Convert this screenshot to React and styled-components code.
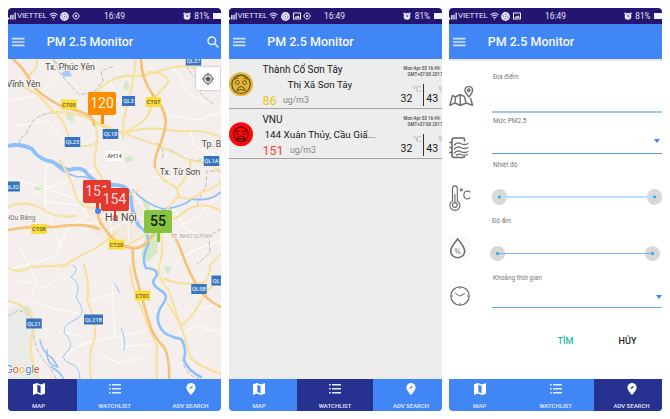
import React from "react";
import styled, { createGlobalStyle } from "styled-components";

const GlobalStyle = createGlobalStyle`
  *, *::before, *::after { box-sizing: border-box; }
  body { margin: 0; background: #fff; font-family: Roboto, "Noto Sans", sans-serif; }
  svg { display: block; flex: none; }
`;

const Board = styled.main`
  display: flex;
  gap: 7.5px;
  padding: 8px 0 0 8px;
  width: 670px;
  height: 419px;
  overflow: hidden;
`;

const Phone = styled.section`
  width: 213px;
  height: 403px;
  flex: none;
  display: flex;
  flex-direction: column;
  border-radius: 4px;
  overflow: hidden;
  background: ${(p) => p.$bg};
`;

/* ---------- status bar ---------- */

const StatusBar = styled.div`
  height: 16px;
  flex: none;
  display: grid;
  grid-template-columns: ${(p) => p.$timeAt}px 1fr auto;
  align-items: center;
  background: #241670;
  color: #e4e0f5;
  overflow: hidden;
`;

const StatusLeft = styled.div`
  display: flex;
  align-items: center;
  gap: 2.7px;
`;

const Carrier = styled.span`
  display: flex;
  align-items: center;
  gap: 1px;
  width: 38px;
  font-size: 8px;
  line-height: 16px;
  letter-spacing: -0.1px;
`;

const Clock = styled.span`
  font-size: 8.4px;
  line-height: 16px;
`;

const StatusRight = styled.div`
  display: flex;
  align-items: center;
  gap: 3.5px;
  font-size: 8.2px;
`;

const Battery = styled.i`
  width: 8px;
  height: 6px;
  background: #f3f1fb;
`;

const SignalIcon = () => (
  <svg width="8" height="8" viewBox="0 0 8 8" fill="#fff">
    <rect x="0" y="5.5" width="1.2" height="2" />
    <rect x="2.2" y="3" width="1.3" height="4.5" />
    <rect x="4.4" y="2.6" width="1.2" height="4.9" />
    <rect x="6.6" y="0.5" width="1.1" height="7" />
  </svg>
);

const WifiIcon = () => (
  <svg width="9" height="8" viewBox="0 0 9 8" fill="none" stroke="#d9d4ef" strokeWidth="1.1">
    <path d="M.5 2.8Q4.5-.8 8.5 2.8M1.9 4.4Q4.5 2 7.1 4.4M3.1 5.9Q4.5 4.6 5.9 5.9" />
    <circle cx="4.5" cy="7" r=".6" fill="#fff" stroke="none" />
  </svg>
);

const BadgeIcon = () => (
  <svg width="9" height="9" viewBox="0 0 9 9">
    <circle cx="4.5" cy="4.5" r="4.4" fill="#efedf9" />
    <circle cx="4.5" cy="4.5" r="2.5" fill="none" stroke="#5d52a0" strokeWidth=".9" strokeDasharray="2.6 1" />
    <circle cx="4.5" cy="4.5" r=".7" fill="#6a60a8" />
  </svg>
);

const TargetIcon = () => (
  <svg width="8" height="8" viewBox="0 0 8 8" fill="none" stroke="#cfc9ea" strokeWidth=".9">
    <circle cx="4" cy="4" r="2.9" />
    <circle cx="4" cy="4" r="1.2" fill="#cfc9ea" stroke="none" />
    <path d="M4 0v1M4 7v1M0 4h1M7 4h1" />
  </svg>
);

const PictureIcon = () => (
  <svg width="8" height="8" viewBox="0 0 8 8">
    <rect x=".5" y="1" width="7" height="6" fill="none" stroke="#ece9f8" />
    <path d="M1.5 5.8L3 4l1 1 1.3-1.8L6.7 5.8z" fill="#fff" />
  </svg>
);

const AlarmIcon = () => (
  <svg width="8" height="8" viewBox="0 0 8 8">
    <circle cx="4" cy="4.4" r="3.3" fill="#e9e6f6" />
    <path d="M.4 2L2 .6M7.6 2L6 .6" stroke="#e9e6f6" strokeWidth="1.1" />
    <path d="M4 2.6v2l1.3-.6" fill="none" stroke="#2a1c74" strokeWidth=".8" />
  </svg>
);

const badges = { target: TargetIcon, picture: PictureIcon };

const Status = ({ icons, timeAt }) => (
  <StatusBar $timeAt={timeAt}>
    <StatusLeft>
      <Carrier><SignalIcon />VIETTEL</Carrier>
      <WifiIcon />
      <BadgeIcon />
      {icons.map((name) => {
        const Icon = badges[name];
        return <Icon key={name} />;
      })}
    </StatusLeft>
    <Clock>16:49</Clock>
    <StatusRight><AlarmIcon />81%<Battery /></StatusRight>
  </StatusBar>
);

/* ---------- app bar ---------- */

const AppBar = styled.header`
  height: 35px;
  flex: none;
  display: flex;
  align-items: center;
  padding: 0 2.5px 0 4px;
  background: #4186f5;
  color: #f6faff;
`;

const Title = styled.h1`
  flex: 1;
  margin: 0 0 0 21.7px;
  font-size: 12.5px;
  font-weight: 500;
  line-height: 16px;
`;

const Header = ({ search }) => (
  <AppBar>
    <svg width="13" height="10" viewBox="0 0 13 10" fill="#cfe0fd">
      <path d="M0 .8h12.5v1.6H0zM0 4.2h12.5v1.6H0zM0 7.6h12.5v1.6H0z" />
    </svg>
    <Title>PM 2.5 Monitor</Title>
    {search && (
      <svg width="12" height="12" viewBox="0 0 12 12" fill="none" stroke="#e6effe" strokeWidth="1.5">
        <circle cx="4.8" cy="4.8" r="3.8" />
        <path d="M7.5 7.5L11.4 11.4" />
      </svg>
    )}
  </AppBar>
);

/* ---------- bottom navigation ---------- */

const NavBar = styled.nav`
  height: 32px;
  flex: none;
  display: grid;
  grid-template-columns: repeat(3, 76px);
  margin-left: -7.5px;
  width: 228px;
  background: #4186f5;
`;

const Tab = styled.div`
  display: flex;
  flex-direction: column;
  align-items: center;
  gap: 6.5px;
  padding-top: 4px;
  color: ${(p) => (p.$active ? "#e3e6f8" : "#e1ecff")};
  background: ${(p) => (p.$active ? "#27318f" : "transparent")};
  font-size: 6px;
  font-weight: 500;
  line-height: 8px;
`;

const MapTabIcon = ({ fold }) => (
  <svg width="12" height="12" viewBox="0 0 12 12">
    <path d="M0 1.3L4 0l4 1.4L12 0v10.7L8 12 4 10.6 0 12z" fill="#fff" />
    <path d="M4.4 1.8l3.2 1.1v7.3L4.4 9.1z" fill={fold} />
  </svg>
);

const ListTabIcon = () => (
  <svg width="12" height="12" viewBox="0 0 12 12" fill="#e6eeff">
    <path d="M0 1h1.7v1.6H0zM3 1h9v1.5H3zM0 5h1.7v1.6H0zM3 5h9v1.5H3zM0 9h1.7v1.6H0zM3 9h9v1.5H3z" />
  </svg>
);

const PinTabIcon = ({ fold }) => (
  <svg width="12" height="12" viewBox="0 0 12 12">
    <path d="M6 0a4.6 4.6 0 0 0-4.6 4.6C1.4 7.7 6 12 6 12s4.6-4.3 4.6-7.4A4.6 4.6 0 0 0 6 0z" fill="#fff" />
    <path d="M4.3 6.2L5 4.4 7.8 2.5 7.2 4.7z" fill={fold} />
  </svg>
);

const tabs = [
  { label: "MAP", Icon: MapTabIcon },
  { label: "WATCHLIST", Icon: ListTabIcon },
  { label: "ADV SEARCH", Icon: PinTabIcon },
];

const Nav = ({ active }) => (
  <NavBar>
    {tabs.map(({ label, Icon }) => (
      <Tab key={label} $active={label === active}>
        <Icon fold={label === active ? "#27318f" : "#4186f5"} />
        {label}
      </Tab>
    ))}
  </NavBar>
);

/* ---------- map ---------- */

const MapView = styled.div`
  position: relative;
  flex: 1;
  overflow: hidden;
`;

const LocateButton = styled.div`
  position: absolute;
  left: 188px;
  top: 8px;
  width: 24px;
  height: 23px;
  display: grid;
  place-items: center;
  background: #fdfdfd;
  box-shadow: 0 0 2px rgba(0, 0, 0, 0.3);
`;

const Marker = styled.div`
  position: absolute;
  left: ${(p) => p.$x}px;
  top: ${(p) => p.$y}px;
  width: 28px;
  height: 23px;
  border-radius: 2px;
  background: ${(p) => p.$bg};
  color: ${(p) => p.$color};
  font-size: 14px;
  line-height: 23px;
  text-align: center;
  font-weight: ${(p) => p.$weight || 400};
  &::after {
    content: "";
    position: absolute;
    left: 13px;
    top: 100%;
    width: 2.5px;
    height: 9px;
    background: inherit;
  }
`;

const shields = [
  ["QL37", 193.5, 60.5, "b"], ["CT05", 69, 104.5, "y"], ["QL3", 128.5, 101, "b"], ["CT07", 153.5, 102, "y"],
  ["QL18", 110.5, 134, "b"], ["QL23", 72.5, 142, "b"], ["AH14", 114.5, 156, "w"], ["QL1A", 211.5, 161, "b"],
  ["QL32", 12, 186.5, "b"], ["CT08", 39, 229, "y"], ["CT20", 116.5, 244.5, "y"], ["QL5B", 199, 289, "b"],
  ["QL5", 218, 280.5, "b"], ["CT01", 142.5, 295.5, "y"], ["QL21", 34, 323.5, "b"], ["QL21B", 93.5, 319.5, "b"],
];

const shieldFill = { b: "#3674bd", y: "#fbdc38", w: "#fefefe" };

const majorRoads = [
  "M12 58Q24 68 33 85Q38 94 63 107Q82 111 91 117Q94 121 94 125",
  "M141 59Q141 78 153 95Q164 106 166 122Q164 136 158 150Q154 160 155 167",
  "M8 230Q30 226 54 227Q84 222 99 229",
  "M98 211Q97 221 108 233Q118 247 133 248Q144 249 153 235Q158 225 164 226Q174 231 182 253Q190 276 201 292Q210 302 221 307",
  "M133 248Q132 265 137 280Q143 302 149 322Q153 337 164 347Q170 358 169 380",
];

const minorRoads = [
  "M8 81Q27 88 38 95Q50 108 60 117Q68 130 71 144Q86 149 98 142",
  "M50 112Q65 111 80 115Q100 123 124 134Q140 127 163 129Q181 132 190 131Q205 130 221 137",
  "M90 115Q92 101 98 91Q107 79 125 76Q139 75 142 76Q162 70 174 67Q190 64 207 72Q212 79 221 84",
  "M37 59Q38 70 28 76",
  "M136 59Q134 77 129 100Q122 119 123 138",
  "M95 120Q98 135 96 151Q91 164 101 176Q107 190 104 207",
  "M95 123Q102 128 124 133Q142 141 158 145Q176 154 191 161Q201 160 221 171",
  "M151 100Q152 112 145 119Q138 126 123 133",
  "M154 98Q162 90 169 82Q165 72 148 72",
  "M8 207Q25 199 42 209Q57 219 75 216",
  "M60 160Q73 182 77 199Q83 209 97 208Q120 200 139 190",
  "M155 166Q157 176 170 184Q179 186 178 197Q163 212 155 227Q142 238 126 246",
  "M178 188Q190 174 191 160M178 196Q190 203 202 192Q216 188 221 181",
  "M160 220Q175 222 185 211Q201 200 221 211",
  "M160 230Q165 247 159 266Q157 278 168 289Q175 307 180 324Q187 342 190 357Q199 367 221 374",
  "M62 267Q80 255 96 248Q109 239 117 232",
  "M84 265Q90 285 87 300Q98 325 94 341Q88 350 91 380",
  "M8 301Q28 305 33 319Q33 334 31 342Q30 360 39 380",
  "M130 267Q132 291 142 309Q148 328 157 345Q156 365 157 380",
  "M164 279Q184 286 201 283Q210 281 210 265Q216 258 221 254",
  "M180 326Q192 319 201 301Q206 287 221 282",
  "M168 304L181 325M8 268Q20 274 31 267L68 265",
];

const thinRoads = [
  "M10 101L38 95L58 76M15 126L48 121L67 145M8 177Q45 188 80 200M31 194L67 181L94 170M46 162L45 205L62 250",
  "M8 270L55 257L68 228L86 217M45 202L79 205L105 232M20 280L45 288L62 274M36 302L55 309L84 314",
  "M67 353Q86 339 113 338Q145 332 151 326M59 332L82 336M63 360L77 346L95 341M112 284L115 337M93 300L117 293",
  "M173 65L188 92L205 103M168 115L198 120L220 112M111 80L115 103M100 98L133 103M190 130L194 146L217 157",
  "M105 183L123 206L146 221M96 218L117 211L140 202M103 235L137 214M109 210L112 239M86 224L118 219L148 227M126 195L129 240M118 183L134 194L150 217",
  "M151 176L166 179L183 169L197 176M172 205L185 228L211 240M180 225L199 216L213 200M177 260L197 249L221 240M190 311L221 304M177 334L199 326L221 334",
  "M20 248L36 279L31 298M120 347L149 344M101 355L119 363L141 358",
];

const rivers = [
  ["M8 146Q20 143 32 149Q39 160 53 162Q62 168 69 170Q80 167 85 171Q95 185 112 185Q129 184 131 198Q132 216 139 226", 3.8],
  ["M139 226Q150 234 148 245Q141 259 146 268Q160 269 156 277Q149 283 160 290Q170 295 163 304Q153 317 162 330Q166 336 181 339Q187 347 184 360Q188 371 201 377", 2.6],
  ["M133 190Q145 204 163 209Q183 207 192 199Q210 202 221 192", 1.8],
  ["M51 160Q60 172 77 177Q88 175 95 183", 1.5],
  ["M40 340Q42 352 52 358L58 367Q46 365 47 350M51 367Q61 372 64 380", 1.5],
  ["M72 265Q81 268 71 277Q82 284 76 298Q88 312 77 319Q63 324 64 333Q74 341 69 350Q56 359 74 365Q80 370 80 380", 0.9],
  ["M53 59Q61 68 69 75M121 328Q126 338 124 350M115 284L120 293M171 150Q191 164 201 160", 0.9],
];

const borders = [
  "M53 113Q42 113 34 120Q29 127 26 135Q17 138 20 144",
  "M54 60Q58 73 67 81Q73 89 80 95L95 91L103 81L101 71L114 66",
  "M187 59Q184 69 197 78Q203 83 200 93L213 104",
  "M8 316L19 310L31 316L34 337Q37 355 49 366L57 380",
  "M221 171L207 171L206 185L196 207M221 229L209 236L210 253L197 264",
  "M157 143Q167 151 161 160M183 358Q183 374 199 379",
];

const CityMap = () => (
  <svg width="213" height="320" viewBox="8 59 213 320" fontFamily="Roboto, 'Noto Sans', sans-serif" textAnchor="middle">
    <rect x="8" y="59" width="213" height="321" fill="#f4efec" />
    <path d="M8 309L28 305L35 329L31 356L38 380H8z" fill="#eaeae6" />
    <path d="M86 211Q93 185 118 188Q148 195 143 225Q137 244 115 245Q91 239 86 211z" fill="#f4e9df" />
    <g fill="#d4e9c7">
      <path d="M126 80l4 5-3 6-4-3zM65 112l8 3 1 7-6-2zM124 158l6-3 4 5-7 3zM34 187l8-2 3 6-8 1zM142 196l7 7 2 13-6-3zM147 230l10 4 1 18-10 10-7-7zM21 306l8 1 4 6-8-1zM163 266l9 1-4 7z" />
    </g>
    <path d="M61 73l8-4 3 7-8 1zM98 94l6 3-3 4zM104 184l10-1-5 5zM104 101l4-2 2 4z" fill="#a9cdf8" />
    <g fill="none" strokeLinejoin="round" strokeLinecap="round">
      {thinRoads.map((d) => <path key={d} d={d} stroke="#fffdfb" strokeWidth="1" />)}
      {borders.map((d) => <path key={d} d={d} stroke="#b3b1ae" strokeWidth=".8" strokeDasharray="4 2.5" />)}
      {rivers.map(([d, w]) => <path key={d} d={d} stroke="#90c0fb" strokeWidth={w} />)}
      {minorRoads.map((d) => <path key={d} d={d} stroke="#f3dc93" strokeWidth="1.9" />)}
      {minorRoads.map((d) => <path key={d} d={d} stroke="#fae3a0" strokeWidth="1.2" />)}
      {majorRoads.map((d) => <path key={d} d={d} stroke="#f3b769" strokeWidth="2.5" />)}
      {majorRoads.map((d) => <path key={d} d={d} stroke="#f9c67c" strokeWidth="1.4" />)}
    </g>
    {shields.map(([name, x, y, kind]) => {
      const w = name.length > 4 ? 19 : name.length < 4 ? 13 : 15.5;
      return (
        <g key={name}>
          <rect x={x - w / 2} y={y - 5} width={w} height="10" fill={shieldFill[kind]} />
          <text x={x} y={y + 2.2} fontSize="5.8" fontWeight="500" fill={kind === "b" ? "#e3effb" : "#5c5637"}>{name}</text>
        </g>
      );
    })}
    <g fill="#494846" fontSize="8.7" stroke="#f8f4f0" strokeWidth="1.5" paintOrder="stroke">
      <text x="70" y="69.5">Tx. Phúc Yên</text>
      <text x="23.5" y="87">Vĩnh Yên</text>
      <text x="211.5" y="147">Tp. B</text>
      <text x="180" y="175">Tx. Từ Sơn</text>
      <text x="121" y="220.5" fontSize="10.5">Hà Nội</text>
      <text x="20.5" y="219.5" fontSize="6.8" fill="#77736f">Hữu Bằng</text>
      <text x="191.5" y="238" fontSize="5.7" fill="#aaa6a0">TT. NHƯ QUỲNH</text>
    </g>
    <text x="22.5" y="373" fontSize="10.8" stroke="#fff" strokeWidth="1" paintOrder="stroke">
      <tspan fill="#4186f5">G</tspan><tspan fill="#e94b3c">o</tspan><tspan fill="#f7bd16">o</tspan>
      <tspan fill="#4186f5">g</tspan><tspan fill="#3aa757">l</tspan><tspan fill="#e94b3c">e</tspan>
    </text>
  </svg>
);

const Position = styled.i`
  position: absolute;
  left: 86.8px;
  top: 149px;
  width: 6px;
  height: 6px;
  border-radius: 50%;
  background: #4186f5;
`;

const MapScreen = () => (
  <MapView>
    <CityMap />
    <LocateButton>
      <svg width="14" height="14" viewBox="0 0 14 14" fill="none" stroke="#666" strokeWidth="1.2">
        <circle cx="7" cy="7" r="4.3" />
        <circle cx="7" cy="7" r="2" fill="#555" />
        <path d="M7 .8v2M7 11.2v2M.8 7h2M11.2 7h2" />
      </svg>
    </LocateButton>
    <Marker $x={80} $y={33} $bg="#fb8c00" $color="#fff3d8">120</Marker>
    <Marker $x={75} $y={121} $bg="#e5392f" $color="#ffdad7">151</Marker>
    <Position />
    <Marker $x={92.5} $y={128.5} $bg="#e5392f" $color="#ffdad7">154</Marker>
    <Marker $x={136} $y={150.5} $bg="#86c440" $color="#17200e" $weight={500}>55</Marker>
  </MapView>
);

/* ---------- watch list ---------- */

const List = styled.div`
  flex: 1;
  background: #ededed;
`;

const Station = styled.article`
  height: 50px;
  display: grid;
  grid-template-columns: 34px 1fr 41px;
  border-bottom: 1px solid #a2a2a2;
  overflow: hidden;
`;

const Face = styled.div`
  width: 24px;
  padding-top: 13px;
`;

const Place = styled.div`
  min-width: 0;
  padding-top: 3px;
  font-size: 10px;
  line-height: 15px;
  color: #202020;
  white-space: nowrap;
`;

const Address = styled.div`
  padding-left: ${(p) => p.$indent}px;
  font-size: 9.9px;
`;

const Reading = styled.div`
  display: flex;
  align-items: center;
  gap: 6.5px;
  padding-top: 1px;
  font-size: 12.5px;
  color: ${(p) => p.$color};
`;

const Unit = styled.span`
  font-size: 8.7px;
  color: #858585;
`;

const Climate = styled.div`
  padding-top: 7px;
  overflow: hidden;
  white-space: nowrap;
`;

const Stamp = styled.div`
  margin-left: 3px;
  padding-left: ${(p) => p.$inset || 0}px;
  font-size: 4.5px;
  font-weight: 500;
  line-height: 5.5px;
  color: #4a4a4a;
`;

const Values = styled.div`
  display: flex;
  align-items: flex-end;
  height: 24px;
  margin-top: 6.5px;
  font-size: 10.5px;
  line-height: 14px;
  color: #191919;
`;

const Degree = styled.span`
  align-self: flex-start;
  flex: none;
  width: ${(p) => p.$width}px;
  margin-left: 0.5px;
  font: 8px/11px "Liberation Serif", serif;
  color: #a2a2a2;
`;

const Rule = styled.i`
  align-self: flex-start;
  flex: none;
  width: 1px;
  height: 22px;
  margin-right: 2.5px;
  background: #333;
`;

const Measure = styled.span`
  flex: none;
  padding-bottom: 2px;
`;

const WorriedFace = () => (
  <svg width="24" height="25" viewBox="0 0 24 25" fill="none" stroke="#594410" strokeWidth="1.1">
    <circle cx="12" cy="12.3" r="12" fill="#e1b53c" stroke="none" />
    <circle cx="12" cy="12.3" r="9.2" />
    <circle cx="8.5" cy="10.5" r="1.9" strokeWidth=".8" /><circle cx="15.5" cy="10.5" r="1.9" strokeWidth=".8" />
    <path d="M5.5 7.7Q7.5 5.5 9.5 6M18.5 7.7Q16.5 5.5 14.5 6" strokeWidth=".9" />
    <path d="M8 18.5Q8.5 14.5 12 14.5T16 18.5Q12 16.5 8 18.5z" strokeWidth=".9" />
  </svg>
);

const AngryFace = () => (
  <svg width="24" height="25" viewBox="0 0 24 25" fill="none" stroke="#500" strokeWidth="1.2">
    <circle cx="12" cy="12.3" r="12" fill="#f90b0b" stroke="none" />
    <circle cx="12" cy="12.3" r="7.3" />
    <path d="M6.5 9.6Q8.5 8.3 10.3 9.8M17.5 9.6Q15.5 8.3 13.7 9.8M7 12h3M14 12h3M8.3 16.8Q9 14 12 14T15.7 16.8z" />
  </svg>
);

const stations = [
  { name: "Thành Cổ Sơn Tây", address: "Thị Xã Sơn Tây", indent: 25, value: 86, color: "#e6c81e", Icon: WorriedFace },
  { name: "VNU", address: "144 Xuân Thủy, Cầu Giấ...", indent: 2, value: 151, color: "#ee4338", Icon: AngryFace },
];

const WatchlistScreen = () => (
  <List>
    {stations.map(({ name, address, indent, value, color, Icon }) => (
      <Station key={name}>
        <Face><Icon /></Face>
        <Place>
          {name}
          <Address $indent={indent}>{address}</Address>
          <Reading $color={color}>{value}<Unit>ug/m3</Unit></Reading>
        </Place>
        <Climate>
          <Stamp>Mon Apr 03 16:49:</Stamp>
          <Stamp $inset={4}>GMT+07:00 2017</Stamp>
          <Values>
            <Measure>32</Measure>
            <Degree $width={10}>°C</Degree>
            <Rule />
            <Measure>43</Measure>
            <Degree $width={6}>%</Degree>
          </Values>
        </Climate>
      </Station>
    ))}
  </List>
);

/* ---------- advanced search ---------- */

const Form = styled.div`
  flex: 1;
  border-top: 2px solid #e7e7e7;
`;

const FormRow = styled.div`
  height: ${(p) => p.$height}px;
  display: grid;
  grid-template: 100% / 43px 1fr;
`;

const IconCell = styled.div`
  padding-top: ${(p) => p.$top}px;
`;

const Field = styled.div`
  display: flex;
  flex-direction: column;
  justify-content: space-between;
  padding-top: ${(p) => p.$top}px;
  border-bottom: ${(p) => p.$line || "0"};
`;

const Label = styled.label`
  padding-left: ${(p) => p.$indent ?? 1}px;
  font-size: 6.5px;
  line-height: 8px;
  color: #777;
`;

const Caret = styled.i`
  align-self: flex-end;
  margin: 0 ${(p) => p.$right}px ${(p) => p.$bottom}px 0;
  border: 3px solid transparent;
  border-top: 4px solid #4186f5;
  border-bottom: 0;
`;

const Slider = styled.div`
  display: flex;
  align-items: center;
  width: 170.5px;
  height: 16px;
  margin: 0 0 ${(p) => p.$bottom}px ${(p) => p.$left}px;
`;

const Track = styled.i`
  flex: 1;
  height: 1.5px;
  margin: 0 -6.5px;
  background: ${(p) => (p.$strong ? "#82abf2" : "#bddcfb")};
  z-index: 1;
`;

const Thumb = styled.i`
  width: 15.5px;
  height: 15.5px;
  border-radius: 50%;
  background: radial-gradient(circle, #35b0df 0 1.3px, #d8d8d8 1.8px);
`;

const Range = ({ left, bottom, strong }) => (
  <Slider $left={left} $bottom={bottom}>
    <Thumb />
    <Track $strong={strong} />
    <Thumb />
  </Slider>
);

const Actions = styled.div`
  display: grid;
  grid-template-columns: 33px 33px;
  column-gap: 29px;
  justify-content: end;
  padding: 25.5px 18px 0 0;
  text-align: center;
`;

const Action = styled.button`
  border: 0;
  padding: 0;
  background: none;
  font: 500 9px/14px Roboto, sans-serif;
  color: ${(p) => p.$color};
`;

const PlaceIcon = () => (
  <svg width="25" height="21" viewBox="0 0 25 21" fill="none" stroke="#747474" strokeWidth="1.5" strokeLinejoin="round">
    <path d="M15.5 10.5L11 8.5 6.5 11 3.5 9.5.8 19.3 6 17l5.5 2.5L17 17l6.5 2.3-2-7.3M6.5 11L6 17M11 9l.5 10.5M15.5 10.5L17 17" />
    <path d="M20 11Q16 6.5 16 4.3a3.8 3.8 0 0 1 7.6 0Q23.6 6.5 20 11z" />
    <circle cx="19.8" cy="4.3" r="1.2" />
  </svg>
);

const DustIcon = () => (
  <svg width="20" height="22" viewBox="0 0 20 22" fill="none" stroke="#686868" strokeWidth="1.6">
    <path d="M15.5 4.5V2.5Q15.5 1 14 1H5Q3 1 3 3V18.5Q3 20.5 5 20.5H14Q15.5 20.5 15.5 19" />
    <path d="M5 8.5Q8 4.5 11.5 6.5T19.5 6.5M5 12.5Q8 8.5 11.5 10.5T19.5 10.5M5 16.5Q8 12.5 11.5 14.5T19.5 14.5M7 18.8Q9 16.3 12 17.5T19 17.5" strokeWidth="1.3" />
    <path d="M.3 5.5H3M.3 10.5H3M.3 15.5H3" />
  </svg>
);

const TemperatureIcon = () => (
  <svg width="22" height="26" viewBox="0 0 22 26" fill="none" stroke="#666" strokeWidth="1.1">
    <path d="M3.5 16V3.3a2.4 2.4 0 0 1 4.8 0V16a5 5 0 1 1-4.8 0z" />
    <circle cx="5.9" cy="20" r="2.4" />
    <path d="M5.9 9v8.5" />
    <circle cx="12.2" cy="4.8" r="1.1" />
    <path d="M21.3 7.3Q20 6 18.5 6Q14.9 6.2 14.8 10Q14.9 13.9 18.5 14Q20.2 14 21.3 12.7" />
  </svg>
);

const HumidityIcon = () => (
  <svg width="21" height="24" viewBox="0 0 21 24">
    <rect width="21" height="24" fill="#f9f9f9" />
    <path d="M8.7 3Q1.7 11.3 1.7 15.2a7 6.5 0 0 0 14 0Q15.7 11.3 8.7 3z" fill="#fff" stroke="#6b6b6b" strokeWidth="1.5" />
    <text x="8.7" y="17.5" fontSize="7.5" fill="#555" textAnchor="middle" fontFamily="Liberation Serif, serif">%</text>
  </svg>
);

const TimeIcon = () => (
  <svg width="22" height="20" viewBox="0 0 22 20" fill="none" stroke="#656565">
    <circle cx="11" cy="10" r="9.2" strokeWidth="1.1" />
    <path d="M6 7l4.7 3L16 7.5M11 1v2M11 17v2M2 10h2M18 10h2" strokeWidth="1" />
  </svg>
);

const SearchScreen = () => (
  <Form>
    <FormRow $height={52}>
      <IconCell $top={25}><PlaceIcon /></IconCell>
      <Field $top={11.5} $line="2px solid #a0c4fb"><Label>Địa điểm</Label></Field>
    </FormRow>
    <FormRow $height={41}>
      <IconCell $top={24}><DustIcon /></IconCell>
      <Field $top={3.5} $line="1px solid #5a97f7"><Label>Mức PM2.5</Label><Caret $right={2.5} $bottom={10} /></Field>
    </FormRow>
    <FormRow $height={58}>
      <IconCell $top={31}><TemperatureIcon /></IconCell>
      <Field $top={6.5}><Label>Nhiệt độ</Label><Range left={-0.5} bottom={7} /></Field>
    </FormRow>
    <FormRow $height={52}>
      <IconCell $top={24}><HumidityIcon /></IconCell>
      <Field $top={5}><Label $indent={-1}>Độ ẩm</Label><Range strong left={-2.5} bottom={2.5} /></Field>
    </FormRow>
    <FormRow $height={44}>
      <IconCell $top={22}><TimeIcon /></IconCell>
      <Field $top={10} $line="1px solid #6ba1f7"><Label>Khoảng thời gian</Label><Caret $right={0.5} $bottom={8} /></Field>
    </FormRow>
    <Actions>
      <Action $color="#1dbf9d">TÌM</Action>
      <Action $color="#1b1b1b">HỦY</Action>
    </Actions>
  </Form>
);

export default function App() {
  return (
    <>
      <GlobalStyle />
      <Board>
        <Phone $bg="#f4efec">
          <Status icons={["target"]} timeAt={96} />
          <Header search />
          <MapScreen />
          <Nav active="MAP" />
        </Phone>
        <Phone $bg="#ededed">
          <Status icons={["picture", "target"]} timeAt={95.5} />
          <Header />
          <WatchlistScreen />
          <Nav active="WATCHLIST" />
        </Phone>
        <Phone $bg="#ffffff">
          <Status icons={["picture"]} timeAt={96} />
          <Header />
          <SearchScreen />
          <Nav active="ADV SEARCH" />
        </Phone>
      </Board>
    </>
  );
}
